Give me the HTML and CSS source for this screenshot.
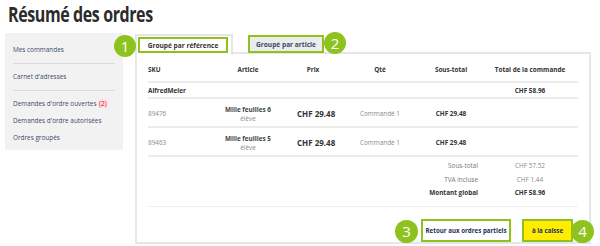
FILE: index.html
```html
<!DOCTYPE html>
<html lang="fr">
<head>
  <meta charset="UTF-8">
  <meta name="viewport" content="width=device-width, initial-scale=1.0">
  <title>Résumé des ordres</title>
  <link rel="stylesheet" href="styles.css">
</head>
<body>
<h1 class="page-title"><span>Résumé des ordres</span></h1>
<div class="layout">
  <aside class="sidebar">
    <div class="nav-group">
      <a class="nav-link">Mes commandes</a>
    </div>
    <div class="nav-group">
      <a class="nav-link">Carnet d'adresses</a>
    </div>
    <div class="nav-group last">
      <a class="nav-link">Demandes d'ordre ouvertes <span class="count">(2)</span></a>
      <a class="nav-link">Demandes d'ordre autorisées</a>
      <a class="nav-link">Ordres groupés</a>
    </div>
  </aside>

  <main class="content">
    <div class="tabs">
      <div class="tab active">
        <span class="badge badge-1">1</span>
        <span class="tab-label">Groupé par référence</span>
      </div>
      <div class="tab">
        <span class="tab-label">Groupé par article</span>
        <span class="badge badge-2">2</span>
      </div>
    </div>

    <div class="panel">
      <table class="orders">
        <colgroup>
          <col style="width: 62px">
          <col style="width: 76px">
          <col style="width: 54px">
          <col style="width: 80px">
          <col style="width: 62px">
          <col style="width: 96px">
        </colgroup>
        <thead>
          <tr>
            <th class="left">SKU</th>
            <th>Article</th>
            <th>Prix</th>
            <th>Qté</th>
            <th>Sous-total</th>
            <th>Total de la commande</th>
          </tr>
        </thead>
        <tbody>
          <tr class="group-row">
            <td class="left strong">AlfredMeier</td>
            <td></td>
            <td></td>
            <td></td>
            <td></td>
            <td class="strong">CHF 58.96</td>
          </tr>
          <tr class="item-row">
            <td class="left muted">89476</td>
            <td class="article"><b>Mille feuilles 6</b><span>élève</span></td>
            <td class="price">CHF 29.48</td>
            <td class="muted">Commandé 1</td>
            <td class="strong">CHF 29.48</td>
            <td></td>
          </tr>
          <tr class="item-row">
            <td class="left muted">89463</td>
            <td class="article"><b>Mille feuilles 5</b><span>élève</span></td>
            <td class="price">CHF 29.48</td>
            <td class="muted">Commandé 1</td>
            <td class="strong">CHF 29.48</td>
            <td></td>
          </tr>
        </tbody>
        <tbody class="totals">
          <tr>
            <td colspan="5" class="label">Sous-total</td>
            <td class="muted">CHF 57.52</td>
          </tr>
          <tr>
            <td colspan="5" class="label">TVA incluse</td>
            <td class="muted">CHF 1.44</td>
          </tr>
          <tr class="grand">
            <td colspan="5" class="label strong">Montant global</td>
            <td class="strong">CHF 58.96</td>
          </tr>
        </tbody>
      </table>

      <div class="actions">
        <span class="badge badge-3">3</span>
        <button class="btn btn-back">Retour aux ordres partiels</button>
        <button class="btn btn-checkout">à la caisse</button>
        <span class="badge badge-4">4</span>
      </div>
    </div>
  </main>
</div>
</body>
</html>
```

FILE: styles.css
```css
body {
  margin: 0;
  font-family: "Open Sans", "Noto Sans", sans-serif;
  color: #333;
  background: #fff;
}
.page-title {
  margin: 0;
  padding: 0 8px;
  height: 33px;
  font-size: 20.5px;
  line-height: 28px;
  font-weight: 700;
  letter-spacing: -0.5px;
  color: #2b2b2b;
}
.page-title span {
  display: inline-block;
  transform: scaleX(0.78);
  transform-origin: left center;
}
.layout {
  display: flex;
  align-items: flex-start;
  padding-left: 5px;
}

/* menu gauche */
.sidebar {
  width: 102px;
  padding: 8px 8px 4px;
  background: #f2f2f2;
}
.nav-group {
  display: flex;
  flex-direction: column;
  padding: 0 0 5px;
  border-bottom: 1px solid #dadada;
}
.nav-group + .nav-group {
  padding-top: 4px;
}
.nav-group.last {
  border-bottom: none;
  padding-bottom: 0;
}
.nav-link {
  font-size: 6.4px;
  line-height: 17px;
  color: #3b4a68;
  white-space: nowrap;
}
.count {
  color: #e2001a;
  background: #fde3e3;
  padding: 0 1px;
}

/* contenu */
.content {
  width: 456px;
  margin-left: 12px;
}
.tabs {
  display: flex;
  align-items: flex-start;
  height: 19px;
  padding-top: 1px;
}
.tab {
  position: relative;
}
.tab.active {
  width: 94px;
  height: 19px;
  border: 2px solid #e6e6e6;
  border-bottom: none;
  background: #fff;
  z-index: 1;
}
.tab-label {
  display: flex;
  align-items: center;
  justify-content: center;
  box-sizing: border-box;
  font-size: 6.6px;
  font-weight: 700;
  color: #333;
  border: 2px solid #8dc21f;
  white-space: nowrap;
}
.tab.active .tab-label {
  width: 90px;
  height: 16px;
  margin: 1px 0 0 1px;
  background: #fff;
}
.tab + .tab .tab-label {
  width: 76px;
  height: 18px;
  margin: 1px 0 0 15px;
  background: #ececec;
  color: #3b4a68;
}

.badge {
  position: absolute;
  width: 22px;
  height: 22px;
  border-radius: 50%;
  background: #8dc21f;
  color: #fff;
  font-size: 15px;
  line-height: 22px;
  text-align: center;
  z-index: 2;
}
.badge-1 {
  left: -23px;
  top: -1px;
}
.badge-2 {
  left: 91px;
  top: -2px;
}

.panel {
  height: 188px;
  padding: 0 11px;
  border: 2px solid #e6e6e6;
  margin-top: -1px;
}
.orders {
  width: 430px;
  border-collapse: collapse;
  table-layout: fixed;
  font-size: 6.4px;
}
.orders th {
  height: 24px;
  padding: 3px 0 0;
  font-weight: 700;
  text-align: center;
  color: #333;
  border-bottom: 2px solid #ececec;
}
.orders td {
  text-align: center;
  padding: 0;
  border-bottom: 2px solid #ececec;
}
.orders .left {
  text-align: left;
}
.strong {
  font-weight: 700;
  color: #333;
}
.muted {
  color: #8a8a8a;
}
.group-row td {
  height: 14px;
}
.item-row td {
  height: 25px;
  padding-top: 2px;
}
.article b {
  display: block;
  color: #444;
}
.article span {
  display: block;
  color: #8a8a8a;
}
.orders .price {
  font-size: 8px;
  font-weight: 700;
  color: #333;
  text-align: left;
  padding-left: 11px;
}
.totals td {
  border-bottom: none;
  height: 14px;
}
.totals tr:first-child td {
  height: 14px;
  padding-top: 1px;
}
.totals .label {
  text-align: right;
  padding-right: 4px;
  color: #777;
}
.totals .label.strong {
  color: #333;
}
.totals .grand td {
  height: 13px;
  padding-bottom: 7px;
  border-bottom: 1px solid #f0f0f0;
}

.actions {
  position: relative;
  display: flex;
  justify-content: flex-end;
  gap: 11px;
  padding-right: 5px;
  margin-top: 12px;
}
.btn {
  height: 23px;
  padding: 0;
  border: 2px solid #8dc21f;
  font-family: inherit;
  font-size: 6.2px;
  font-weight: 700;
  color: #23305a;
  white-space: nowrap;
  cursor: pointer;
}
.btn-back {
  width: 90px;
  background: #fff;
}
.btn-checkout {
  width: 51px;
  background: #ffec00;
}
.badge-3 {
  left: 247px;
  top: 1px;
  width: 23px;
  height: 23px;
  line-height: 23px;
}
.badge-4 {
  right: -16px;
  top: 1px;
  width: 23px;
  height: 23px;
  line-height: 23px;
}
```
